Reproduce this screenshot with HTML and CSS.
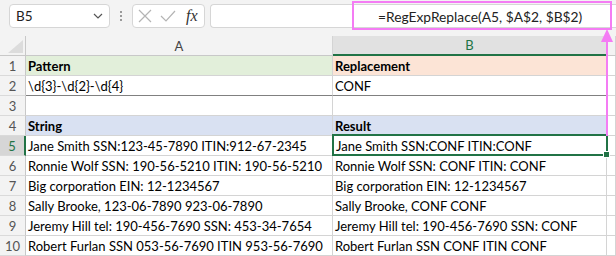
FILE: index.html
```html
<!DOCTYPE html>
<html lang="en">
<head>
    <meta charset="UTF-8">
    <title>RegExpReplace</title>
    <link rel="stylesheet" href="styles.css">
</head>
<body>

<div class="toolbar">
    <div class="name-box">
        <span>B5</span>
        <svg class="chevron" width="10" height="6" viewBox="0 0 10 6"><path d="M1 1 L5 5 L9 1" fill="none" stroke="#555" stroke-width="1.2"/></svg>
    </div>
    <div class="grip"><i></i><i></i><i></i></div>
    <div class="fx-box">
        <svg width="14" height="14" viewBox="0 0 14 14"><path d="M1 1 L13 13 M13 1 L1 13" stroke="#b4b4b4" stroke-width="1.2"/></svg>
        <svg width="16" height="12" viewBox="0 0 16 12"><path d="M1 6 L6 11 L15 1" fill="none" stroke="#b4b4b4" stroke-width="1.2"/></svg>
        <span class="fx">fx</span>
    </div>
    <div class="formula-bar">
        <span class="formula">=RegExpReplace(A5, $A$2, $B$2)</span>
    </div>
    <div class="callout"></div>
</div>

<div class="sheet">
    <div class="corner"></div>
    <div class="col-head">A</div>
    <div class="col-head active">B</div>
    <div class="col-head"></div>

    <div class="row-head">1</div>
    <div class="cell bold green">Pattern</div>
    <div class="cell bold peach">Replacement</div>
    <div class="cell"></div>

    <div class="row-head">2</div>
    <div class="cell split">\d{3}-\d{2}-\d{4}</div>
    <div class="cell split">CONF</div>
    <div class="cell"></div>

    <div class="row-head">3</div>
    <div class="cell"></div>
    <div class="cell"></div>
    <div class="cell"></div>

    <div class="row-head">4</div>
    <div class="cell bold blue">String</div>
    <div class="cell bold blue">Result</div>
    <div class="cell"></div>

    <div class="row-head active">5</div>
    <div class="cell">Jane Smith SSN:123-45-7890 ITIN:912-67-2345</div>
    <div class="cell selected">Jane Smith SSN:CONF ITIN:CONF</div>
    <div class="cell"></div>

    <div class="row-head">6</div>
    <div class="cell">Ronnie Wolf SSN: 190-56-5210 ITIN: 190-56-5210</div>
    <div class="cell">Ronnie Wolf SSN: CONF ITIN: CONF</div>
    <div class="cell"></div>

    <div class="row-head">7</div>
    <div class="cell">Big corporation EIN: 12-1234567</div>
    <div class="cell">Big corporation EIN: 12-1234567</div>
    <div class="cell"></div>

    <div class="row-head">8</div>
    <div class="cell">Sally Brooke, 123-06-7890 923-06-7890</div>
    <div class="cell">Sally Brooke, CONF CONF</div>
    <div class="cell"></div>

    <div class="row-head">9</div>
    <div class="cell">Jeremy Hill tel: 190-456-7690 SSN: 453-34-7654</div>
    <div class="cell">Jeremy Hill tel: 190-456-7690 SSN: CONF</div>
    <div class="cell"></div>

    <div class="row-head">10</div>
    <div class="cell">Robert Furlan SSN 053-56-7690 ITIN 953-56-7690</div>
    <div class="cell">Robert Furlan SSN CONF ITIN CONF</div>
    <div class="cell"></div>

    <div class="arrow"></div>
</div>

</body>
</html>
```

FILE: styles.css
```css
body {
    margin: 0;
    font-family: Lato, "Open Sans", sans-serif;
    background: #fff;
    overflow: hidden;
}
.toolbar {
    position: relative;
    display: flex;
    align-items: center;
    height: 36px;
    padding: 0 0 0 9px;
    background: #f3f3f3;
    box-sizing: border-box;
}
.name-box, .fx-box, .formula-bar {
    height: 24px;
    box-sizing: border-box;
    background: #fff;
    border: 1px solid #d6d6d6;
    border-radius: 4px;
    display: flex;
    align-items: center;
    margin-top: -4px;
}
.name-box {
    width: 101px;
    padding: 0 6px 0 6px;
    justify-content: space-between;
    font-size: 13.5px;
    color: #222;
}
.grip {
    display: flex;
    flex-direction: column;
    gap: 2px;
    width: 22px;
    align-items: center;
    margin-top: -4px;
}
.grip i {
    width: 2px;
    height: 2px;
    background: #9a9a9a;
}
.fx-box {
    width: 73px;
    padding: 0 5px 0 5px;
    gap: 8px;
}
.fx {
    font-family: "Liberation Serif", serif;
    font-style: italic;
    font-size: 16px;
    color: #333;
    margin-left: 2px;
}
.formula-bar {
    flex: 1;
    margin-left: 5px;
    border-right: none;
    border-radius: 4px 0 0 4px;
    padding-left: 167px;
    font-size: 13.8px;
    color: #222;
}
.callout {
    position: absolute;
    left: 352px;
    top: 1px;
    width: 260px;
    height: 29px;
    box-sizing: border-box;
    border: 2px solid #f47cf4;
}
.sheet {
    position: relative;
    display: grid;
    grid-template-columns: 26px 307px 274px 1fr;
    grid-auto-rows: 20px;
    font-size: 13px;
}
.corner {
    background: #f3f3f3;
    border-right: 1px solid #c8c8c8;
    border-bottom: 1px solid #c8c8c8;
    position: relative;
}
.corner::after {
    content: "";
    position: absolute;
    right: 2px;
    bottom: 2px;
    border-style: solid;
    border-width: 0 0 13px 15px;
    border-color: transparent transparent #dcdcdc transparent;
}
.col-head {
    background: #f3f3f3;
    border-right: 1px solid #d4d4d4;
    border-bottom: 1px solid #c8c8c8;
    text-align: center;
    font-size: 13px;
    line-height: 20px;
    color: #444;
}
.col-head.active {
    background: #e1e1e1;
    color: #217346;
    border-bottom: 2px solid #217346;
    line-height: 19px;
}
.row-head {
    background: #f3f3f3;
    border-right: 1px solid #c8c8c8;
    border-bottom: 1px solid #dadada;
    text-align: center;
    line-height: 20px;
    color: #555;
    font-size: 13px;
}
.row-head.active {
    background: #d6d6d6;
    color: #217346;
    border-right: 2px solid #217346;
}
.cell {
    border-right: 1px solid #d4d4d4;
    border-bottom: 1px solid #d4d4d4;
    padding-left: 2px;
    line-height: 20px;
    white-space: nowrap;
    overflow: hidden;
    color: #000;
}
.cell.bold {
    font-weight: bold;
}
.green {
    background: #e2efda;
}
.peach {
    background: #fce4d6;
}
.blue {
    background: #d9e1f2;
}
.cell.split {
    border-bottom-color: #808080;
}
.cell.selected {
    position: relative;
    overflow: visible;
    padding-left: 3px;
}
.cell.selected::before {
    content: "";
    position: absolute;
    left: -1px;
    top: -2px;
    right: -2px;
    bottom: -1px;
    border: 2px solid #217346;
}
.cell.selected::after {
    content: "";
    position: absolute;
    right: -4px;
    bottom: -3px;
    width: 5px;
    height: 5px;
    background: #217346;
    border: 1px solid #fff;
}
.arrow {
    position: absolute;
    left: 606px;
    top: -4px;
    width: 2px;
    height: 104px;
    background: #f47cf4;
}
.arrow::before {
    content: "";
    position: absolute;
    left: -5px;
    top: -3px;
    border-style: solid;
    border-width: 0 6px 13px 6px;
    border-color: transparent transparent #f47cf4 transparent;
}
```
